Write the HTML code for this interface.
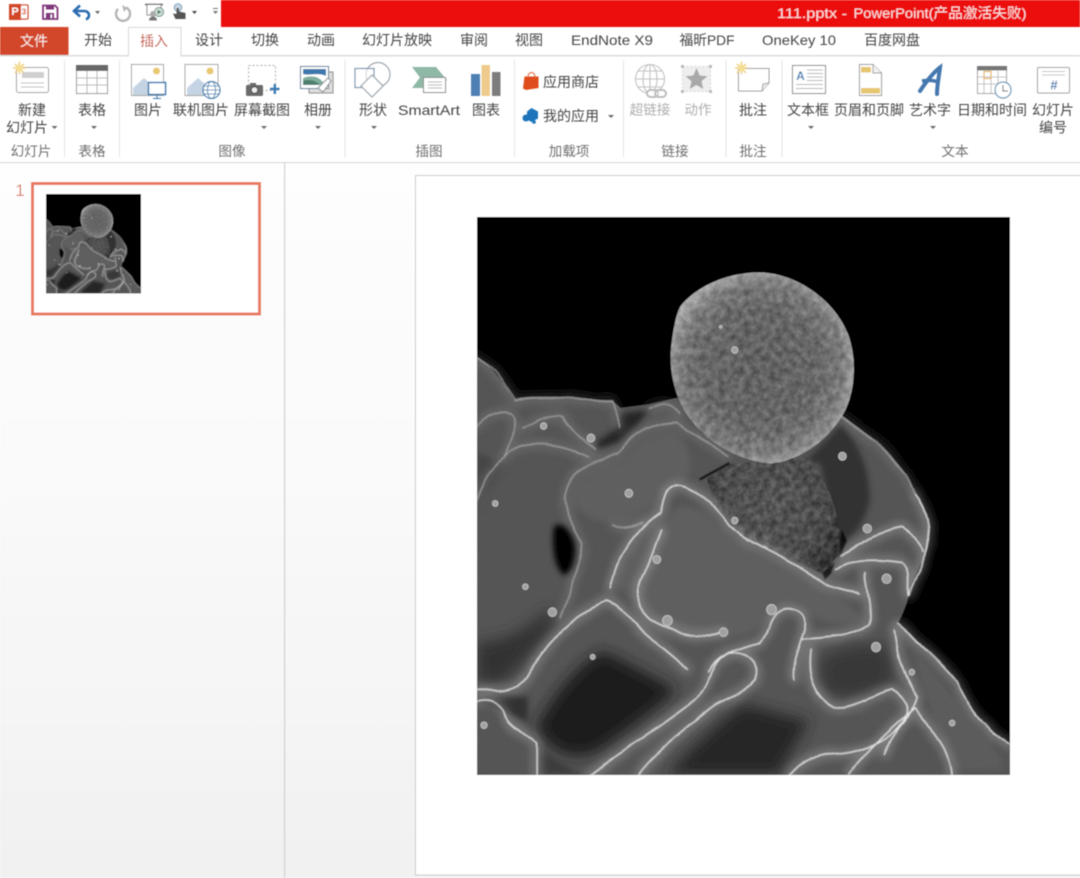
<!DOCTYPE html>
<html lang="zh"><head><meta charset="utf-8"><title>111.pptx - PowerPoint</title>
<style>
html,body{margin:0;padding:0;width:1080px;height:878px;overflow:hidden;background:#fff}
svg{display:block;position:absolute;left:0;top:0}
text{font-family:"Liberation Sans","Noto Sans CJK SC",sans-serif;font-size:14px;fill:#4a4a4a;text-anchor:middle;dominant-baseline:central}
.g text{fill:#707070;font-size:13.6px}
.off text{fill:#adadad;font-size:13.6px}
.t text{font-size:14px;fill:#444}
.blu{fill:none;stroke:#3f7cad;stroke-width:1.4}
</style></head><body>
<svg width="1080" height="878" viewBox="0 0 1080 878" xmlns="http://www.w3.org/2000/svg">
<defs>
<linearGradient id="bg" x1="0" y1="0" x2="0" y2="1"><stop offset="0" stop-color="#fefefe"/><stop offset=".5" stop-color="#f9f9f9"/><stop offset="1" stop-color="#f1f1f1"/></linearGradient>
<radialGradient id="s1" gradientUnits="userSpaceOnUse" cx="830" cy="435" r="272"><stop offset="0" stop-color="#626262"/><stop offset=".6" stop-color="#686868"/><stop offset=".86" stop-color="#7c7c7c"/><stop offset="1" stop-color="#a8a8a8"/></radialGradient>
<radialGradient id="s2" gradientUnits="userSpaceOnUse" cx="860" cy="810" r="220"><stop offset="0" stop-color="#565656"/><stop offset=".7" stop-color="#4d4d4d"/><stop offset="1" stop-color="#343434"/></radialGradient>
<filter id="tex" x="0" y="0" width="100%" height="100%" color-interpolation-filters="sRGB">
<feTurbulence type="fractalNoise" baseFrequency=".35" numOctaves="2" seed="4" result="n"/>
<feColorMatrix in="n" type="matrix" values="1 0 0 0 0 1 0 0 0 0 1 0 0 0 0 0 0 0 0 1" result="g"/>
<feComposite in="SourceGraphic" in2="g" operator="arithmetic" k1="0" k2="1" k3=".07" k4="-.035" result="c"/>
<feComposite in="c" in2="SourceAlpha" operator="in"/>
</filter>
<filter id="tex2" x="0" y="0" width="100%" height="100%" color-interpolation-filters="sRGB">
<feTurbulence type="fractalNoise" baseFrequency=".055" numOctaves="3" seed="9" result="n"/>
<feColorMatrix in="n" type="matrix" values="1 0 0 0 0 1 0 0 0 0 1 0 0 0 0 0 0 0 0 1" result="g"/>
<feComposite in="SourceGraphic" in2="g" operator="arithmetic" k1="0" k2="1" k3=".3" k4="-.15" result="c"/>
<feComposite in="c" in2="SourceAlpha" operator="in"/>
</filter>
<filter id="rough" x="-3%" y="-3%" width="106%" height="106%">
<feTurbulence type="fractalNoise" baseFrequency=".012" numOctaves="2" seed="7" result="n"/>
<feDisplacementMap in="SourceGraphic" in2="n" scale="14" xChannelSelector="R" yChannelSelector="G"/>
</filter>
<filter id="b1" x="-10%" y="-10%" width="120%" height="120%"><feGaussianBlur stdDeviation="1.3"/></filter>
<filter id="b2" x="-10%" y="-10%" width="120%" height="120%"><feGaussianBlur stdDeviation="8"/></filter>
<filter id="b4" x="-10%" y="-10%" width="120%" height="120%"><feGaussianBlur stdDeviation="13"/></filter>
<filter id="b3" x="-30%" y="-30%" width="160%" height="160%"><feGaussianBlur stdDeviation="20"/></filter>
<filter id="soft" x="-5%" y="-5%" width="110%" height="110%"><feGaussianBlur stdDeviation=".4"/></filter>

<g id="ridgeStrong">
<path d="M400,1040C420,950 470,880 545,830C550,790 560,755 595,760C650,770 690,810 740,870C790,915 900,950 1000,1020C1030,1045 1070,1040 1110,1060"/>
<path d="M545,880C530,930 500,990 485,1030C470,1090 490,1130 560,1150C620,1170 680,1180 720,1165"/>
<path d="M20,1320C80,1330 130,1330 160,1290C200,1220 270,1130 390,1075C440,1090 470,1150 530,1190C570,1220 590,1240 620,1260"/>
<path d="M340,1555C450,1480 560,1410 640,1350C680,1310 690,1240 740,1220C790,1210 820,1240 815,1280C810,1320 740,1340 690,1370C600,1440 520,1500 480,1555"/>
<path d="M680,1270C720,1215 780,1200 830,1190C860,1150 860,1110 900,1100C950,1100 970,1120 950,1170C930,1220 920,1260 925,1290"/>
<path d="M950,1180C1010,1180 1090,1170 1140,1140C1150,1090 1120,1020 1130,1000"/>
<path d="M1270,780C1300,820 1315,870 1305,930C1290,990 1260,1020 1250,1060"/>
<path d="M1060,950C1120,910 1190,880 1230,875C1260,890 1290,920 1295,940"/>
<path d="M1040,990C1080,960 1150,960 1230,970C1260,985 1245,1040 1250,1060"/>
<path d="M970,1210C960,1280 980,1340 1040,1370C1100,1370 1160,1330 1200,1320C1240,1340 1260,1370 1240,1400C1200,1470 1100,1500 1000,1500C960,1510 930,1530 910,1555"/>
<path d="M1210,1160C1220,1230 1240,1290 1275,1340C1260,1400 1200,1440 1180,1500"/>
<path d="M1080,1555C1140,1480 1210,1420 1270,1370C1320,1440 1370,1480 1375,1555"/>
<path d="M1220,1140C1280,1190 1350,1250 1390,1300C1420,1370 1470,1430 1540,1470"/>
<path d="M20,1355C50,1345 90,1355 100,1390C110,1420 160,1440 190,1470L190,1555"/>
</g>
<g id="ridgeSoft">
<path d="M270,790C280,730 320,700 420,670C460,640 470,590 590,585C640,620 700,650 735,680"/>
<path d="M270,790C270,840 300,880 320,920C310,990 290,1050 260,1120"/>
<path d="M20,600C50,560 110,540 125,570C130,620 110,640 100,680"/>
<path d="M100,680C150,620 270,650 340,680"/>
<path d="M125,525C200,510 330,525 405,525L430,600"/>
<path d="M150,600C190,590 220,560 260,570C290,610 320,630 355,660"/>
<path d="M20,405C60,425 90,470 125,520"/>
<path d="M1060,570C1130,620 1230,680 1270,780"/>
<path d="M405,870C430,880 470,870 490,860"/>
<path d="M510,545C540,530 570,530 600,560"/>
<path d="M20,800C40,740 70,700 100,680"/>
</g>

<symbol id="sem" viewBox="20 20 1520 1535" preserveAspectRatio="none">
<rect x="20" y="20" width="1520" height="1535" fill="#000"/>
<g filter="url(#tex)">
<path fill="#555" d="M20,405C60,425 90,470 125,520C200,505 330,520 405,525L430,545L510,535L600,515L1060,565C1130,615 1230,680 1270,780C1300,820 1315,860 1310,910C1300,960 1270,1000 1255,1040C1250,1080 1235,1110 1220,1140C1280,1190 1350,1250 1390,1300C1420,1370 1470,1430 1540,1470L1540,1555L20,1555Z"/>
</g>
<g filter="url(#b3)">
<path fill="#1e1e1e" d="M190,1420C230,1350 300,1250 380,1215C440,1240 510,1280 590,1320C540,1370 450,1430 380,1480C320,1520 230,1510 190,1420Z"/>
<path fill="#262626" d="M560,1555C640,1470 710,1410 780,1360C830,1370 890,1390 970,1405C940,1450 910,1500 880,1555Z"/>
<path fill="#303030" d="M20,1190C100,1190 170,1150 220,1100C250,1110 240,1140 200,1190C150,1240 120,1280 90,1300L20,1300Z"/>
<path fill="#383838" d="M1000,1235C1050,1200 1130,1190 1190,1200C1205,1260 1220,1290 1195,1305C1140,1330 1090,1350 1040,1340C1000,1320 990,1280 1000,1235Z"/>
</g>
<g filter="url(#b2)">
<path fill="#333" d="M960,690C1000,650 1040,610 1060,590C1110,650 1140,710 1140,800C1125,860 1100,890 1060,920L1050,950L1000,700Z"/>
<path fill="#282828" d="M430,560L510,550L480,590L425,640L360,660L360,640L420,600Z"/>
<path fill="#050505" d="M240,870C268,855 298,890 302,930C302,970 292,995 270,1005C245,995 230,930 240,870Z"/>
<path fill="#333" d="M20,1350C60,1320 120,1340 165,1340L165,1410L120,1390Z"/>
<path fill="#3c3c3c" d="M190,1480L320,1555L190,1555Z"/>
<path fill="#444" d="M100,700C60,760 35,800 20,830L20,670Z"/>
<path fill="#666" d="M420,1030C440,950 490,880 560,850C600,790 650,810 740,890C800,930 900,970 1000,1040C1060,1070 1100,1090 1120,1130C1050,1160 980,1120 900,1090C850,1120 850,1150 780,1170C700,1190 620,1170 560,1150C500,1120 460,1080 420,1030Z" opacity=".55"/>
<path fill="#6a6a6a" d="M290,790C300,740 340,710 430,690C470,650 490,620 580,610C630,640 640,700 620,740C550,770 520,830 440,860C400,860 320,870 290,790Z" opacity=".5"/>
<path fill="#6a6a6a" d="M1260,1210C1320,1260 1380,1340 1420,1400C1480,1460 1520,1500 1520,1540L1380,1540C1340,1440 1300,1350 1260,1210Z" opacity=".4"/>
</g>
<path fill="url(#s2)" filter="url(#tex2)" d="M675,740L740,700L960,680C1020,740 1060,840 1055,940L1010,1005C900,950 790,915 740,870C700,820 690,780 675,740Z"/>
<path fill="#080808" d="M1040,960L1060,945L1075,910L1060,880L1052,945ZM1005,1000L1040,970L1030,1000L1012,1018Z" filter="url(#b1)"/>
<g fill="none" stroke-linecap="round" stroke-linejoin="round" filter="url(#rough)">
<use href="#ridgeSoft" stroke="#aaa" stroke-width="24" opacity=".26" filter="url(#b4)"/>
<use href="#ridgeSoft" stroke="#a8a8a8" stroke-width="4" opacity=".85" filter="url(#b1)"/>
<use href="#ridgeStrong" stroke="#ccc" stroke-width="26" opacity=".34" filter="url(#b4)"/>
<use href="#ridgeStrong" stroke="#ececec" stroke-width="3.800" filter="url(#b1)"/>
</g>
<path d="M655,742L740,697" fill="none" stroke="#0a0a0a" stroke-width="6" filter="url(#b1)"/>
<path fill="url(#s1)" filter="url(#tex2)" d="M600,265C650,205 745,170 830,172C930,175 1040,245 1080,345C1105,415 1100,510 1060,570C1015,640 935,692 860,698C780,695 690,650 635,585C590,535 562,450 575,365C580,325 588,285 600,265Z"/>
<g fill="#a0a0a0" stroke="#c8c8c8" stroke-width="2.500">
<circle cx="755" cy="386" r="9"/><circle cx="715" cy="322" r="4"/><circle cx="453" cy="780" r="11"/><circle cx="1062" cy="678" r="11"/><circle cx="1133" cy="877" r="12"/><circle cx="1188" cy="1015" r="13"/><circle cx="563" cy="1130" r="14"/><circle cx="723" cy="1162" r="12"/><circle cx="860" cy="1100" r="14"/><circle cx="533" cy="962" r="11"/><circle cx="755" cy="855" r="9"/><circle cx="1158" cy="1203" r="13"/><circle cx="1260" cy="1272" r="8"/><circle cx="1375" cy="1412" r="8"/><circle cx="345" cy="628" r="11"/><circle cx="210" cy="595" r="9"/><circle cx="72" cy="808" r="8"/><circle cx="158" cy="1037" r="8"/><circle cx="235" cy="1107" r="12"/><circle cx="350" cy="1230" r="7"/><circle cx="40" cy="1418" r="9"/>
</g>
</symbol>
</defs>

<g filter="url(#soft)">
<!-- background panes -->
<rect x="0" y="163" width="1080" height="715" fill="url(#bg)"/>
<rect x="284" y="163" width="1.2" height="715" fill="#cfcfcf"/>
<rect x="415.5" y="175.5" width="700" height="699.5" fill="#fff" stroke="#c9c9c9" stroke-width="1"/>

<!-- title bar -->
<rect x="221" y="0" width="859" height="27" fill="#ec1010"/>
<text x="812" y="13" textLength="70" lengthAdjust="spacingAndGlyphs" style="fill:#fbdede;font-size:14px">111.pptx -</text>
<text x="940" y="13" textLength="173" lengthAdjust="spacingAndGlyphs" style="fill:#fbdede;font-size:14px">PowerPoint(产品激活失败)</text>

<!-- QAT -->
<rect x="14" y="5" width="14" height="14" rx="1" fill="#fff" stroke="#d24726" stroke-width="1.3"/>
<rect x="9" y="4" width="12" height="16" fill="#d24726"/>
<text x="15" y="12" style="fill:#fff;font-size:11px;font-weight:bold">P</text>
<text x="24" y="12" style="fill:#d24726;font-size:8px;font-weight:bold">3</text>
<path d="M43,5.5H55L57.5,8V19H43Z" fill="none" stroke="#80397b" stroke-width="1.8"/>
<rect x="46" y="5.5" width="8" height="4" fill="#80397b"/>
<rect x="46" y="13" width="8" height="6" fill="#80397b"/><rect x="50.500" y="14.500" width="1.6" height="3.500" fill="#fff"/>
<path d="M76,11H84C88,11 89,14 89,15C89,17 88,18.500 86,19.500" fill="none" stroke="#2b6cb0" stroke-width="2.6"/>
<path d="M80,5.500L74,11L80,16.500" fill="none" stroke="#2b6cb0" stroke-width="2.6"/>
<path d="M95,11h5l-2.500,3z" fill="#666"/>
<path d="M126,7.500A7,7 0 1 1 118,9" fill="none" stroke="#b5b5b5" stroke-width="2.400"/>
<path d="M122,5l5,3-3,4z" fill="#b5b5b5"/>
<path d="M145,4.500H163" stroke="#666" stroke-width="1.500"/>
<path d="M147,5V15H161V5" fill="#fff" stroke="#888" stroke-width="1"/>
<circle cx="159" cy="12" r="4.500" fill="#cfe0d8" stroke="#6a8f80"/>
<path d="M157.500,9.800l4,2.200-4,2.200z" fill="#4f7a68"/>
<circle cx="153" cy="14" r="3" fill="#aaa"/><path d="M149,20.500a4,4 0 0 1 8,0z" fill="#777"/>
<circle cx="178" cy="7.500" r="3.800" fill="#c7d6e4" stroke="#7fa0bd"/>
<path d="M176.500,8V14L173,13.500L175.500,19H185.500V13L179,11.500V8Z" fill="#555"/>
<path d="M192,11h5l-2.500,3z" fill="#444"/>
<path d="M213,8.500h5" stroke="#777"/><path d="M213,11h5l-2.500,3z" fill="#777"/>

<!-- tabs -->
<rect x="0" y="27" width="68.500" height="28.500" fill="#d2472a"/>
<rect x="0" y="55" width="1080" height="1.500" fill="#dcdcdc"/>
<path d="M128.500,55.500V27.500H181V55.500" fill="#fff" stroke="#d6d6d6"/>
<rect x="129" y="54" width="51.500" height="3" fill="#fff"/>
<text x="34" y="41" style="fill:#fbe9e3">文件</text>
<g class="t">
<text x="98" y="40">开始</text>
<text x="154" y="41" style="fill:#c64a2c">插入</text>
<text x="209" y="40">设计</text><text x="265" y="40">切换</text><text x="321" y="40">动画</text>
<text x="397" y="40">幻灯片放映</text><text x="474" y="40">审阅</text><text x="529" y="40">视图</text>
<text x="612" y="40" textLength="82" lengthAdjust="spacingAndGlyphs">EndNote X9</text>
<text x="707" y="40" textLength="55" lengthAdjust="spacingAndGlyphs">福昕PDF</text>
<text x="799" y="40" textLength="74" lengthAdjust="spacingAndGlyphs">OneKey 10</text>
<text x="892" y="40">百度网盘</text>
</g>

<!-- ribbon end + separators -->
<rect x="0" y="162" width="1080" height="1.200" fill="#dcdcdc"/>
<g fill="#e4e4e4">
<rect x="64" y="60" width="1" height="97"/><rect x="119" y="60" width="1" height="97"/><rect x="344.500" y="60" width="1" height="97"/><rect x="514" y="60" width="1" height="97"/><rect x="623" y="60" width="1" height="97"/><rect x="725.500" y="60" width="1" height="97"/><rect x="781.500" y="60" width="1" height="97"/>
</g>

<!-- group labels -->
<g class="g">
<text x="31" y="151.500">幻灯片</text><text x="92" y="151.500">表格</text><text x="232" y="151.500">图像</text><text x="429" y="151.500">插图</text><text x="569" y="151.500">加载项</text><text x="675" y="151.500">链接</text><text x="753" y="151.500">批注</text><text x="955" y="151.500">文本</text>
</g>

<!-- button labels -->
<g class="t">
<text x="32" y="110">新建</text><text x="27" y="127.500">幻灯片</text>
<text x="92" y="110">表格</text>
<text x="148" y="110">图片</text>
<text x="201" y="110">联机图片</text>
<text x="262" y="110">屏幕截图</text>
<text x="318" y="110">相册</text>
<text x="373" y="110">形状</text>
<text x="429" y="110" textLength="62" lengthAdjust="spacingAndGlyphs">SmartArt</text>
<text x="486" y="110">图表</text>
<text x="571" y="82">应用商店</text><text x="571" y="116">我的应用</text>
<text x="753" y="110">批注</text>
<text x="808" y="110">文本框</text>
<text x="869" y="110">页眉和页脚</text>
<text x="930" y="110">艺术字</text>
<text x="992" y="110">日期和时间</text>
<text x="1053" y="110">幻灯片</text><text x="1053" y="127.500">编号</text>
</g>
<g class="off"><text x="650" y="110">超链接</text><text x="698" y="110">动作</text></g>
<g fill="#6a6a6a">
<path d="M51.500,126h6l-3,3z"/><path d="M91,126h6l-3,3z"/><path d="M261,126h6l-3,3z"/><path d="M315,126h6l-3,3z"/><path d="M371,126h6l-3,3z"/><path d="M608,115h6l-3,3z"/><path d="M808,126h6l-3,3z"/><path d="M930,126h6l-3,3z"/>
</g>

<!-- 新建 -->
<rect x="16.500" y="67.500" width="32" height="25" rx="2" fill="#fff" stroke="#a0a0a0"/>
<rect x="22" y="72" width="22" height="6" fill="#cfcfcf"/>
<path d="M21,83H44M21,87H44" stroke="#bdbdbd"/>
<g stroke="#ecc96a" stroke-width="1.300"><path d="M13,68H26M19.500,61.500V74.500M15,64L24,73M24,64L15,73"/></g><circle cx="19.500" cy="68" r="3.500" fill="#f6dd94"/>

<!-- 表格 -->
<rect x="76.500" y="65.500" width="31" height="28" fill="#fff" stroke="#9a9a9a"/>
<rect x="76" y="65" width="32" height="6" fill="#686868"/>
<path d="M77,78H107M77,85H107M87,71V93M97,71V93" stroke="#b5b5b5"/>

<!-- 图片 -->
<rect x="131.500" y="64.500" width="32" height="31" fill="#fff" stroke="#a5a5a5"/>
<circle cx="156.500" cy="71" r="3.500" fill="#e8c870"/>
<path d="M133,95L133,88L144,78L152,85L158,95Z" fill="#c5d4e4"/>
<rect x="148.500" y="82.500" width="17" height="12" fill="#fff" stroke="#3d7cb0" stroke-width="1.500"/>
<path d="M157,95V98M153,98.500H161" stroke="#3d7cb0"/>

<!-- 联机图片 -->
<rect x="185" y="64.500" width="33" height="31" fill="#fff" stroke="#a5a5a5"/>
<circle cx="210" cy="71" r="3.500" fill="#e8c870"/>
<path d="M187,95L187,88L198,78L206,85L210,95Z" fill="#c5d4e4"/>
<circle cx="211.500" cy="90" r="8.500" fill="#fff" stroke="#3d7cb0" stroke-width="1.200"/>
<ellipse cx="211.500" cy="90" rx="4" ry="8.500" class="blu" style="stroke-width:.9"/><path d="M203,90H220M204,86H219M204,94H219" stroke="#3d7cb0" stroke-width=".8"/>

<!-- 屏幕截图 -->
<rect x="248.500" y="65.500" width="27" height="25" fill="none" stroke="#aaa" stroke-dasharray="2 2"/>
<rect x="246" y="85" width="17" height="11" rx="1.500" fill="#6a6a6a"/><rect x="250" y="83" width="6" height="3" fill="#6a6a6a"/>
<circle cx="254.500" cy="90" r="3.300" fill="#eee" stroke="#444"/>
<path d="M270,89H279.500M274.800,84V94" stroke="#3d7cb0" stroke-width="2.400"/>

<!-- 相册 -->
<rect x="309" y="72" width="24" height="21" fill="#ddd" stroke="#8c8c8c"/>
<rect x="300.500" y="66.500" width="28" height="22" fill="#fff" stroke="#5e7e9a"/>
<path d="M303,69H326V76C318,72 310,76 303,74Z" fill="#3d78ad"/>
<path d="M303,78C310,75 318,76 322,81L326,85H303Z" fill="#7fae9c"/>
<path d="M303,81C308,79 315,80 320,85H303Z" fill="#4d7f6c"/>
<path d="M318,88L328,78L331,81L323,92Z" fill="#fff" stroke="#888"/>

<!-- 形状 -->
<circle cx="378" cy="74.500" r="12" fill="none" stroke="#a0a8b0" stroke-width="1.200"/>
<rect x="355" y="68.500" width="19" height="19" fill="#fff" fill-opacity=".6" stroke="#8098ad" stroke-width="1.200"/>
<path d="M372,75L383,86L372,97L361,86Z" fill="#fff" stroke="#9aa5ad" stroke-width="1.200"/>

<!-- SmartArt -->
<path d="M412,67H436L447,80L437,88H412L420,77.500Z" fill="#8fb8a6"/>
<rect x="423.500" y="77.500" width="22" height="15" fill="#fff" stroke="#8a8a8a"/>
<path d="M428,82H442M428,85H442M428,88H442" stroke="#b0b0b0"/>

<!-- 图表 -->
<rect x="471" y="74" width="9" height="22" fill="#4f80b4"/><rect x="481.500" y="65" width="8.500" height="31" fill="#eecb8c"/><rect x="492" y="72" width="8.500" height="24" fill="#7d7d7d"/>

<!-- 应用商店 -->
<path d="M524.500,76.500H538.500V88L526,90L523,88.500Z" fill="#e04e1c"/>
<path d="M528,77C528,71 535,71 535,77" fill="none" stroke="#e07a50" stroke-width="1.300"/>

<!-- 我的应用 -->
<path d="M531.500,108L538,111.500V118.500L531.500,122L527,119.500V111.500Z" fill="#1a74bb"/>
<circle cx="526" cy="118" r="3.500" fill="#1a74bb"/><circle cx="534" cy="122" r="1.800" fill="#1a74bb"/>

<!-- 超链接 -->
<g fill="none" stroke="#c2c2c2" stroke-width="1.100">
<circle cx="650" cy="79" r="14.500"/><ellipse cx="650" cy="79" rx="7" ry="14.500"/><path d="M636,79H664M638,71H662M638,87H662M650,64.500V93.500"/>
</g>
<rect x="647" y="90" width="11" height="7" rx="3.500" fill="#fff" stroke="#bdbdbd" stroke-width="2"/>
<rect x="655" y="90" width="11" height="7" rx="3.500" fill="#fff" fill-opacity=".3" stroke="#bdbdbd" stroke-width="2"/>

<!-- 动作 -->
<rect x="682.500" y="66.500" width="28" height="25" fill="#eeeeee" stroke="#d5d5d5" stroke-dasharray="2 2"/>
<g fill="#bbb"><rect x="681" y="65" width="3" height="3"/><rect x="709" y="65" width="3" height="3"/><rect x="681" y="90" width="3" height="3"/><rect x="709" y="90" width="3" height="3"/></g>
<path d="M696.500,68L699.800,75.500L707.500,76.200L701.500,81.300L703.300,89L696.500,85L689.700,89L691.500,81.300L685.500,76.200L693.200,75.500Z" fill="#a9a9a9"/>

<!-- 批注 -->
<path d="M738.500,68.500H769V83L762,91H738.500Z" fill="#fff" stroke="#9a9a9a"/>
<path d="M762,91L763,84L769,83" fill="#eee" stroke="#9a9a9a"/>
<g stroke="#ecc96a" stroke-width="1.300"><path d="M735,68H748M741.500,61.500V74.500M737,64L746,73M746,64L737,73"/></g><circle cx="741.500" cy="68" r="3.500" fill="#f6dd94"/>

<!-- 文本框 -->
<rect x="792.500" y="65.500" width="33" height="28" fill="#fff" stroke="#8c8c8c"/>
<text x="800.500" y="76" style="fill:#4d86b5;font-size:12px;font-weight:bold">A</text>
<path d="M807,70H823M807,73.500H823M807,77H823M807,80.500H823M796,84.500H823M796,88.500H823" stroke="#b5b5b5"/>

<!-- 页眉 -->
<path d="M859.500,64.500H873L881.500,73V95.500H859.500Z" fill="#fff" stroke="#9a9a9a"/>
<path d="M873,64.500V73H881.500" fill="#f2f2f2" stroke="#9a9a9a"/>
<rect x="861" y="67" width="10" height="5.500" fill="#e6c66f"/><rect x="861" y="88" width="19" height="5.500" fill="#e6c66f"/>

<!-- 艺术字 -->
<path d="M920,91C926,82 934,72 940,67.500C939,76 937,86 937,94" fill="none" stroke="#4578af" stroke-width="4" stroke-linecap="round"/>
<path d="M922,81C928,80 933,80 938,82" fill="none" stroke="#4578af" stroke-width="3.500"/>

<!-- 日期 -->
<rect x="977.500" y="66.500" width="29" height="27" fill="#fff" stroke="#a5a5a5"/>
<rect x="977" y="66" width="30" height="4.500" fill="#777"/>
<path d="M984,71V93M991,71V93M998,71V85M978,77H1006M978,84H1006" stroke="#c0c0c0"/>
<rect x="984" y="71.500" width="7" height="7" fill="none" stroke="#e6b35c" stroke-width="1.200"/>
<circle cx="1003" cy="90" r="8" fill="#fff" stroke="#6d97bb" stroke-width="1.200"/>
<path d="M1003,85V91H1008" fill="none" stroke="#555"/>

<!-- 编号 -->
<rect x="1037.500" y="67.500" width="32" height="25.500" rx="1.500" fill="#fff" stroke="#9e9e9e"/>
<path d="M1042,71.500H1065M1042,75H1065" stroke="#c4c4c4"/>
<text x="1054" y="85" style="fill:#3f78ad;font-size:13px;font-weight:bold">#</text>

<!-- thumbnail pane -->
<text x="20" y="190.500" style="fill:#d9826c;font-size:17px">1</text>
<rect x="32.500" y="183.500" width="227" height="130.500" fill="#fff" stroke="#e87a5f" stroke-width="3"/>
<use href="#sem" x="46" y="194" width="95" height="99.500"/>

<!-- main image -->
<use href="#sem" x="477" y="217" width="533" height="558"/>
</g>
</svg>
</body></html>
